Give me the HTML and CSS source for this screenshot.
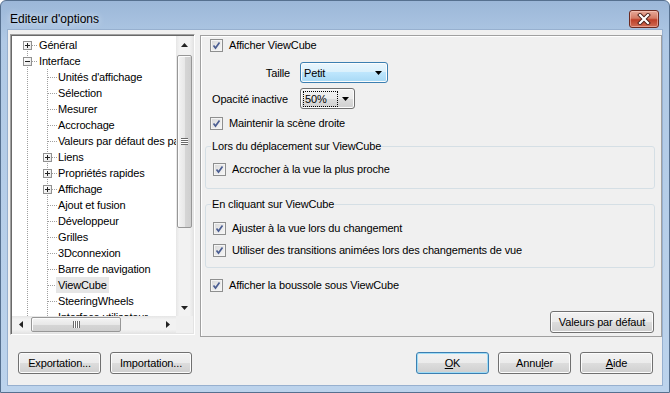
FILE: index.html
```html
<!DOCTYPE html>
<html lang="fr">
  <head>
    <meta charset="UTF-8" />
    <title>Editeur d'options</title>
    <link rel="stylesheet" href="styles.css">
  </head>
  <body>
    <div class="window">
      <!-- barre de titre -->
      <div class="titlebar">
        <span class="title">Editeur d'options</span>
        <button type="button" class="close-btn" aria-label="Fermer">
          <svg width="14" height="12" viewBox="0 0 14 12">
            <path d="M3 2 L11 10 M11 2 L3 10" stroke="#4a1e18" stroke-width="4" stroke-linecap="square" fill="none" />
            <path d="M3 2 L11 10 M11 2 L3 10" stroke="#ffffff" stroke-width="2.2" stroke-linecap="square" fill="none" />
          </svg>
        </button>
      </div>

      <div class="client">
        <div class="main">
          <!-- arborescence -->
          <div class="tree-box">
            <div class="tree">
              <div class="node top first">
                <span class="gutter"><span class="exp"><svg width="9" height="9" viewBox="0 0 9 9"><path d="M2 4.5 H7 M4.5 2 V7" stroke="#222" /></svg></span></span>
                <span class="label">Général</span>
              </div>
              <div class="node top">
                <span class="gutter"><span class="exp"><svg width="9" height="9" viewBox="0 0 9 9"><path d="M2 4.5 H7" stroke="#222" /></svg></span></span>
                <span class="label">Interface</span>
              </div>
              <div class="node"><span class="gutter"></span><span class="sub"></span><span class="label">Unités d'affichage</span></div>
              <div class="node"><span class="gutter"></span><span class="sub"></span><span class="label">Sélection</span></div>
              <div class="node"><span class="gutter"></span><span class="sub"></span><span class="label">Mesurer</span></div>
              <div class="node"><span class="gutter"></span><span class="sub"></span><span class="label">Accrochage</span></div>
              <div class="node"><span class="gutter"></span><span class="sub"></span><span class="label">Valeurs par défaut des paramètres</span></div>
              <div class="node">
                <span class="gutter"></span>
                <span class="sub"><span class="exp"><svg width="9" height="9" viewBox="0 0 9 9"><path d="M2 4.5 H7 M4.5 2 V7" stroke="#222" /></svg></span></span>
                <span class="label">Liens</span>
              </div>
              <div class="node">
                <span class="gutter"></span>
                <span class="sub"><span class="exp"><svg width="9" height="9" viewBox="0 0 9 9"><path d="M2 4.5 H7 M4.5 2 V7" stroke="#222" /></svg></span></span>
                <span class="label">Propriétés rapides</span>
              </div>
              <div class="node">
                <span class="gutter"></span>
                <span class="sub"><span class="exp"><svg width="9" height="9" viewBox="0 0 9 9"><path d="M2 4.5 H7 M4.5 2 V7" stroke="#222" /></svg></span></span>
                <span class="label">Affichage</span>
              </div>
              <div class="node"><span class="gutter"></span><span class="sub"></span><span class="label">Ajout et fusion</span></div>
              <div class="node"><span class="gutter"></span><span class="sub"></span><span class="label">Développeur</span></div>
              <div class="node"><span class="gutter"></span><span class="sub"></span><span class="label">Grilles</span></div>
              <div class="node"><span class="gutter"></span><span class="sub"></span><span class="label">3Dconnexion</span></div>
              <div class="node"><span class="gutter"></span><span class="sub"></span><span class="label">Barre de navigation</span></div>
              <div class="node"><span class="gutter"></span><span class="sub"></span><span class="label selected">ViewCube</span></div>
              <div class="node"><span class="gutter"></span><span class="sub"></span><span class="label">SteeringWheels</span></div>
              <div class="node"><span class="gutter"></span><span class="sub"></span><span class="label">Interface utilisateur</span></div>
            </div>

            <!-- barre de défilement verticale -->
            <div class="vscroll">
              <span class="sb-btn"><svg width="7" height="4" viewBox="0 0 7 4"><path d="M0 4 L3.5 0 L7 4 Z" fill="#222" /></svg></span>
              <span class="sb-track"><span class="thumb-v"><span class="grip-v"></span></span></span>
              <span class="sb-btn"><svg width="7" height="4" viewBox="0 0 7 4"><path d="M0 0 L7 0 L3.5 4 Z" fill="#222" /></svg></span>
            </div>
            <!-- barre de défilement horizontale -->
            <div class="hscroll">
              <span class="sb-btn"><svg width="4" height="7" viewBox="0 0 4 7"><path d="M4 0 L4 7 L0 3.5 Z" fill="#222" /></svg></span>
              <span class="sb-track"><span class="thumb-h"><span class="grip-h"></span></span></span>
              <span class="sb-btn"><svg width="4" height="7" viewBox="0 0 4 7"><path d="M0 0 L4 3.5 L0 7 Z" fill="#222" /></svg></span>
            </div>
            <div class="corner"></div>
          </div>

          <!-- options ViewCube -->
          <div class="panel">
            <div class="check-row">
              <span class="cb"><svg width="11" height="11" viewBox="0 0 11 11"><path d="M2.5 5.5 L4.5 8 L8.5 2.5" stroke="#4b5e92" stroke-width="1.7" fill="none" /></svg></span>
              <span>Afficher ViewCube</span>
            </div>

            <div class="form-grid">
              <span class="lbl lbl-right">Taille</span>
              <div class="combo combo-hot">
                <span class="combo-val">Petit</span>
                <svg width="7" height="4" viewBox="0 0 7 4"><path d="M0 0 L7 0 L3.5 4 Z" fill="#000" /></svg>
              </div>
              <span class="lbl">Opacité inactive</span>
              <div class="combo combo-small">
                <span class="combo-val focus">50%</span>
                <svg width="7" height="4" viewBox="0 0 7 4"><path d="M0 0 L7 0 L3.5 4 Z" fill="#000" /></svg>
              </div>
            </div>

            <div class="check-row row-keep">
              <span class="cb"><svg width="11" height="11" viewBox="0 0 11 11"><path d="M2.5 5.5 L4.5 8 L8.5 2.5" stroke="#4b5e92" stroke-width="1.7" fill="none" /></svg></span>
              <span>Maintenir la scène droite</span>
            </div>

            <fieldset class="group group-drag">
              <legend>Lors du déplacement sur ViewCube</legend>
              <div class="check-row">
                <span class="cb"><svg width="11" height="11" viewBox="0 0 11 11"><path d="M2.5 5.5 L4.5 8 L8.5 2.5" stroke="#4b5e92" stroke-width="1.7" fill="none" /></svg></span>
                <span>Accrocher à la vue la plus proche</span>
              </div>
            </fieldset>

            <fieldset class="group group-click">
              <legend>En cliquant sur ViewCube</legend>
              <div class="check-row">
                <span class="cb"><svg width="11" height="11" viewBox="0 0 11 11"><path d="M2.5 5.5 L4.5 8 L8.5 2.5" stroke="#4b5e92" stroke-width="1.7" fill="none" /></svg></span>
                <span>Ajuster à la vue lors du changement</span>
              </div>
              <div class="check-row">
                <span class="cb"><svg width="11" height="11" viewBox="0 0 11 11"><path d="M2.5 5.5 L4.5 8 L8.5 2.5" stroke="#4b5e92" stroke-width="1.7" fill="none" /></svg></span>
                <span>Utiliser des transitions animées lors des changements de vue</span>
              </div>
            </fieldset>

            <div class="check-row row-compass">
              <span class="cb"><svg width="11" height="11" viewBox="0 0 11 11"><path d="M2.5 5.5 L4.5 8 L8.5 2.5" stroke="#4b5e92" stroke-width="1.7" fill="none" /></svg></span>
              <span>Afficher la boussole sous ViewCube</span>
            </div>

            <div class="panel-actions">
              <button type="button" class="btn btn-defaults">Valeurs par défaut</button>
            </div>
          </div>
        </div>

        <!-- boutons du bas -->
        <div class="footer">
          <div class="footer-left">
            <button type="button" class="btn btn-export">Exportation...</button>
            <button type="button" class="btn btn-import">Importation...</button>
          </div>
          <div class="footer-right">
            <button type="button" class="btn btn-dlg btn-default"><u>O</u>K</button>
            <button type="button" class="btn btn-dlg">Annu<u>l</u>er</button>
            <button type="button" class="btn btn-dlg"><u>A</u>ide</button>
          </div>
        </div>
      </div>
    </div>
  </body>
</html>
```

FILE: styles.css
```css
html {
  background: #ffffff;
}

body {
  margin: 0;
  padding: 0;
  font-family: "Liberation Sans", Arial, sans-serif;
  font-size: 11px;
  letter-spacing: -0.15px;
  color: #000;
}

.window {
  width: 670px;
  height: 393px;
  box-sizing: border-box;
  display: flex;
  flex-direction: column;
  border: 1px solid #56708f;
  border-radius: 6px 6px 0 0;
  background: linear-gradient(to bottom, #9cb7d8 0, #b0c9e5 40px, #bcd3ec 100%);
  overflow: hidden;
}

/* barre de titre */
.titlebar {
  height: 29px;
  box-sizing: border-box;
  padding: 6px 10px 0 9px;
  display: flex;
  align-items: center;
  justify-content: space-between;
  flex: none;
}

.title {
  font-size: 12px;
  letter-spacing: 0;
  text-shadow: 0 0 6px rgba(255, 255, 255, 0.9);
}

.close-btn {
  width: 30px;
  height: 18px;
  padding: 0;
  border: 1px solid #6c2a20;
  border-radius: 3px;
  background: linear-gradient(to bottom, #e6a999 0, #d47a64 45%, #be3f28 55%, #d06d55 100%);
  box-shadow: inset 0 0 0 1px rgba(255, 210, 200, 0.5);
  display: flex;
  align-items: center;
  justify-content: center;
}

/* zone cliente */
.client {
  flex: 1;
  margin: 0 7px 7px 7px;
  background: #f0f0f0;
  box-shadow: 0 0 0 1px #97b0cf;
  display: flex;
  flex-direction: column;
  padding: 4px 0 0 2px;
  box-sizing: border-box;
}

.main {
  display: flex;
  align-items: flex-start;
  gap: 5px;
}

/* arborescence */
.tree-box {
  width: 185px;
  height: 301px;
  box-sizing: border-box;
  border: 1px solid;
  border-color: #a0a0a0 #ffffff #ffffff #a0a0a0;
  box-shadow: inset 1px 1px 0 #696969, inset -1px -1px 0 #e3e3e3;
  padding: 1px;
  background: #fff;
  display: grid;
  grid-template-columns: 1fr 17px;
  grid-template-rows: 1fr 17px;
}

.tree {
  overflow: hidden;
  padding-top: 1px;
}

.node {
  display: flex;
  align-items: center;
  height: 16px;
  white-space: nowrap;
}

.gutter {
  flex: none;
  width: 26px;
  height: 16px;
  display: flex;
  align-items: center;
  background: repeating-linear-gradient(to bottom, #a0a0a0 0 1px, transparent 1px 2px) 15px 0 / 1px 100% no-repeat;
}

.node.top .gutter {
  background:
    repeating-linear-gradient(to bottom, #a0a0a0 0 1px, transparent 1px 2px) 15px 0 / 1px 100% no-repeat,
    repeating-linear-gradient(to right, #a0a0a0 0 1px, transparent 1px 2px) 16px 8px / 10px 1px no-repeat;
}

.node.top.first .gutter {
  background:
    repeating-linear-gradient(to bottom, #a0a0a0 0 1px, transparent 1px 2px) 15px 8px / 1px 8px no-repeat,
    repeating-linear-gradient(to right, #a0a0a0 0 1px, transparent 1px 2px) 16px 8px / 10px 1px no-repeat;
}

.sub {
  flex: none;
  width: 19px;
  height: 16px;
  display: flex;
  align-items: center;
  background:
    repeating-linear-gradient(to bottom, #a0a0a0 0 1px, transparent 1px 2px) 9px 0 / 1px 100% no-repeat,
    repeating-linear-gradient(to right, #a0a0a0 0 1px, transparent 1px 2px) 10px 8px / 9px 1px no-repeat;
}

.exp {
  width: 9px;
  height: 9px;
  box-sizing: border-box;
  border: 1px solid #919191;
  background: linear-gradient(135deg, #ffffff, #e6e6e6);
  display: flex;
  margin-left: 11px;
}

.exp svg {
  margin: -1px;
}

.sub .exp {
  margin-left: 5px;
}

.label {
  padding: 0 1px;
  line-height: 16px;
}

.label.selected {
  background: #e6e6e6;
  padding: 0 2px;
  margin-left: -1px;
}

/* barres de défilement */
.vscroll,
.hscroll {
  display: flex;
  background: linear-gradient(to right, #e6e6e6, #f2f2f2 20%, #f2f2f2 80%, #e6e6e6);
}

.vscroll {
  flex-direction: column;
  grid-row: 1;
  grid-column: 2;
}

.hscroll {
  grid-row: 2;
  grid-column: 1;
  background: linear-gradient(to bottom, #e6e6e6, #f2f2f2 20%, #f2f2f2 80%, #e6e6e6);
}

.sb-btn {
  flex: none;
  width: 17px;
  height: 17px;
  display: flex;
  align-items: center;
  justify-content: center;
}

.sb-track {
  flex: 1;
  display: flex;
}

.vscroll .sb-track {
  flex-direction: column;
}

.thumb-v {
  margin: 2px 1px 0 1px;
  height: 171px;
  border: 1px solid #979797;
  border-radius: 2px;
  background: linear-gradient(to right, #f4f4f4, #e8e8e8 50%, #d6d6d6 51%, #cfcfcf);
  box-shadow: inset 1px 1px 0 #fcfcfc;
  display: flex;
  align-items: center;
  justify-content: center;
}

.grip-v {
  width: 7px;
  height: 7px;
  background: repeating-linear-gradient(to bottom, #6a6a6a 0 1px, #ffffff 1px 2px);
}

.thumb-h {
  margin: 1px 0 1px 2px;
  width: 88px;
  border: 1px solid #979797;
  border-radius: 2px;
  background: linear-gradient(to bottom, #f4f4f4, #e8e8e8 50%, #d6d6d6 51%, #cfcfcf);
  box-shadow: inset 1px 1px 0 #fcfcfc;
  display: flex;
  align-items: center;
  justify-content: center;
}

.grip-h {
  width: 7px;
  height: 7px;
  background: repeating-linear-gradient(to right, #6a6a6a 0 1px, #ffffff 1px 2px);
}

.corner {
  background: #f0f0f0;
}

/* panneau de droite */
.panel {
  margin-top: 1px;
  width: 462px;
  height: 302px;
  box-sizing: border-box;
  border: 1px solid #a0a0a0;
  box-shadow: inset 1px 1px 0 #ffffff;
  padding: 0 6px 0 4px;
  display: flex;
  flex-direction: column;
}

.check-row {
  display: flex;
  align-items: center;
  height: 18px;
  gap: 6px;
  white-space: nowrap;
}

.panel > .check-row {
  padding-left: 5px;
}

.cb {
  flex: none;
  width: 13px;
  height: 13px;
  box-sizing: border-box;
  border: 1px solid #8e8f8f;
  background: linear-gradient(135deg, #d8d8d8, #f8f8f8);
  box-shadow: inset 0 0 0 1px #f4f4f4;
  display: flex;
  align-items: center;
  justify-content: center;
}

.form-grid {
  margin: 8px 0 0 7px;
  display: grid;
  grid-template-columns: 78px auto;
  column-gap: 10px;
  row-gap: 5px;
  align-items: center;
  justify-items: start;
}

.lbl {
  white-space: nowrap;
}

.lbl-right {
  justify-self: end;
}

.combo {
  height: 21px;
  box-sizing: border-box;
  border: 1px solid #707070;
  border-radius: 3px;
  background: linear-gradient(to bottom, #f2f2f2 0, #ebebeb 50%, #dddddd 50%, #cfcfcf 100%);
  box-shadow: inset 0 0 0 1px #fcfcfc;
  display: flex;
  align-items: center;
  justify-content: space-between;
  padding: 0 5px 0 3px;
}

.combo-hot {
  width: 88px;
  border-color: #3c7fb1;
  background: linear-gradient(to bottom, #eaf6fd 0, #d9f0fc 50%, #bee6fd 50%, #a7d9f5 100%);
}

.combo-small {
  width: 55px;
  padding-left: 2px;
}

.combo-val.focus {
  border: 1px dotted #000;
  padding: 1px 10px 1px 1px;
}

.row-keep {
  margin-top: 5px;
}

.group {
  margin: 0;
  border: 1px solid #d5dfe5;
  border-radius: 3px;
  padding: 0 6px 10px 7px;
}

.group legend {
  padding: 0 1px;
  margin-left: -2px;
  line-height: 14px;
}

.group .check-row {
  margin-top: 7px;
}

.group-drag {
  margin-top: 7px;
}

.group-click {
  margin-top: 8px;
  padding-bottom: 8px;
}

.group-click .check-row:first-of-type {
  margin-top: 8px;
}

.group-click .check-row + .check-row {
  margin-top: 4px;
}

.row-compass {
  margin-top: 8px;
}

.panel-actions {
  margin-top: 17px;
  display: flex;
  justify-content: flex-end;
  padding-right: 1px;
}

/* boutons */
.btn {
  height: 22px;
  padding: 0 6px;
  border: 1px solid #707070;
  border-radius: 3px;
  background: linear-gradient(to bottom, #f2f2f2 0, #ebebeb 50%, #dddddd 50%, #cfcfcf 100%);
  box-shadow: inset 0 0 0 1px #fcfcfc;
  font-family: "Liberation Sans", Arial, sans-serif;
  font-size: 11px;
  letter-spacing: -0.15px;
  color: #000;
}

.btn-defaults {
  width: 104px;
}

.footer {
  margin-top: 15px;
  display: flex;
  justify-content: space-between;
  padding: 0 9px 0 8px;
}

.footer-left,
.footer-right {
  display: flex;
  gap: 9px;
}

.btn-export {
  width: 83px;
}

.btn-import {
  width: 82px;
}

.btn-dlg {
  width: 73px;
}

.btn-default {
  border-color: #3c7fb1;
  box-shadow: inset 0 0 0 1px #9fdcf6;
}
```
